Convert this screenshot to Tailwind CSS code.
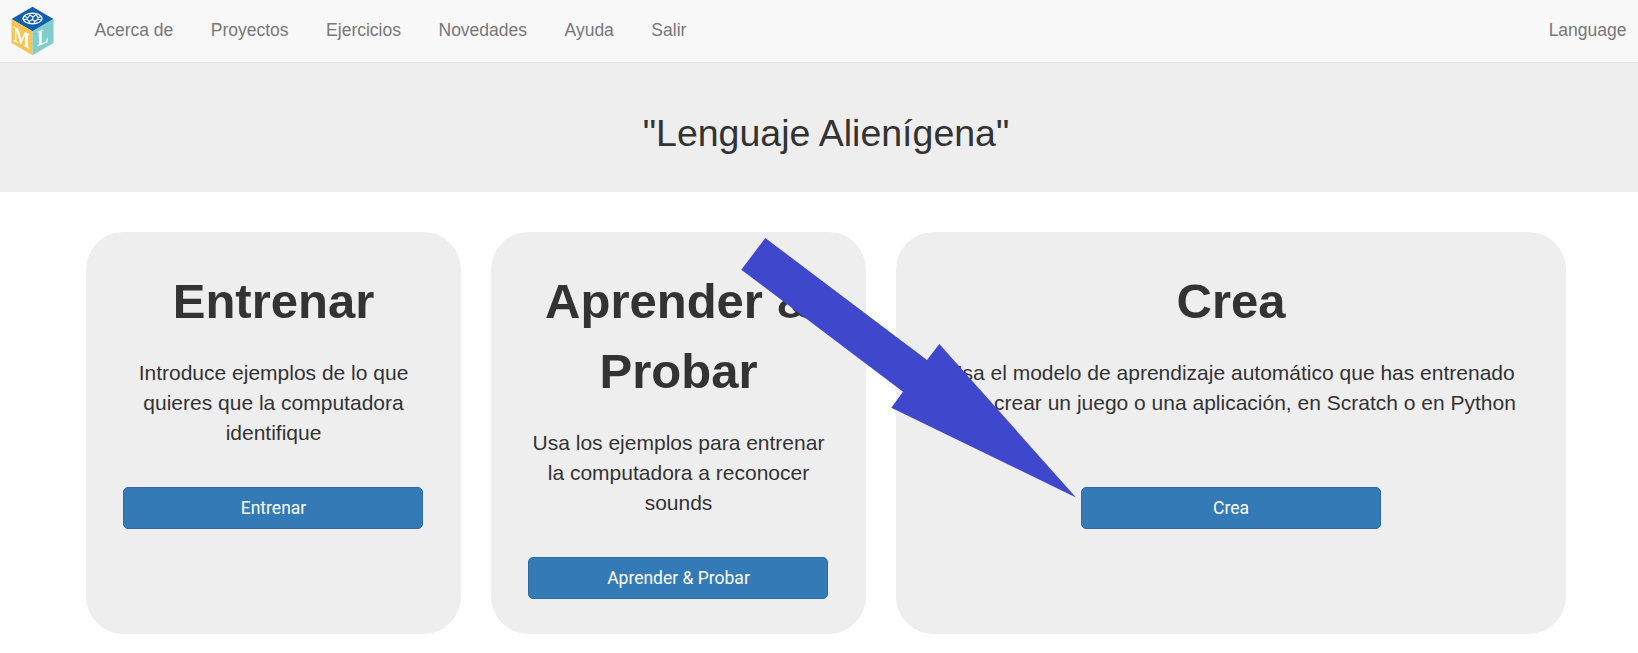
<!DOCTYPE html>
<html lang="es">
<head>
<meta charset="utf-8">
<title>Lenguaje Alienígena</title>
<script src="https://cdn.jsdelivr.net/npm/@tailwindcss/browser@4"></script>
</head>
<body class="relative h-[653px] overflow-hidden bg-white font-['Liberation_Sans',Arial,sans-serif] text-[#333]">
<nav class="flex h-[63px] items-start border-b border-[#e5e5e5] bg-[#f8f8f8] text-[17.5px] leading-[25px] text-[#777]">
  <svg class="ml-[11px] mt-[6px] h-[50px] w-[43px] shrink-0" viewBox="0 0 43 50">
    <path fill="#1360ae" d="M21.5 .7 42.5 13 21.5 25.3 .5 13z"/>
    <path fill="#f6c453" d="M.5 13 21.5 25.3V49.3L.5 37z"/>
    <path fill="#82cccb" d="M42.5 13 21.5 25.3V49.3L42.5 37z"/>
    <ellipse cx="21.5" cy="12.500" rx="9.5" ry="5.3" fill="#1360ae" stroke="#fff" stroke-width="1.400"/>
    <path fill="none" stroke="#fff" stroke-width="1.100" d="M13 10.500l4 1 2-2.500 3 2 3-2.500 2 3 3-1M12.500 14l3.500-1 2 2.500 3.500-2 2.500 2 3-2.500 3 1M17 11.500l-1 1.500M22 11l-.5 2.500M27 11v2M18 15.500l1 2M24 15.500l-1 2.500"/>
    <text transform="matrix(1 .5 0 1 2.600 34.800)" font-family="Liberation Serif" font-size="22" font-weight="700" textLength="16.500" lengthAdjust="spacingAndGlyphs" fill="#fff">M</text>
    <text transform="matrix(1 -.4 0 1 26.200 40.300)" font-family="Liberation Serif" font-size="22" font-weight="700" textLength="11" lengthAdjust="spacingAndGlyphs" fill="#fff">L</text>
  </svg>
  <div class="ml-[40.500px] flex gap-[37.500px] pt-[17.500px]">
    <a>Acerca de</a><a>Proyectos</a><a>Ejercicios</a><a>Novedades</a><a>Ayuda</a><a>Salir</a>
  </div>
  <a class="ml-auto mr-[11.500px] pt-[17.500px]">Language</a>
</nav>
<header class="flex h-[129px] items-center justify-center bg-[#eee] pt-[11px] pl-[14px]">
  <h1 class="text-[37.500px] leading-[41px]">"Lenguaje Alienígena"</h1>
</header>
<main class="flex gap-[30px] pl-[86px] pt-[40px] text-center">
  <section class="flex h-[402px] w-[375px] flex-col items-center rounded-[37.500px] bg-[#eee] px-[37px] pt-[34px]">
    <h2 class="text-[49px] font-bold leading-[70px]">Entrenar</h2>
    <p class="mt-[22px] h-[90px] whitespace-nowrap text-[21px] leading-[30px]">Introduce ejemplos de lo que<br>quieres que la computadora<br>identifique</p>
    <button class="mr-px mt-[39px] h-[42px] w-[300px] shrink-0 rounded-[5px] border border-[#2e6da4] bg-[#337ab7] pl-px font-[Roboto] text-[17.500px] leading-[25px] text-white">Entrenar</button>
  </section>
  <section class="flex h-[402px] w-[375px] flex-col items-center rounded-[37.500px] bg-[#eee] px-[37px] pt-[34px]">
    <h2 class="text-[49px] font-bold leading-[70px]">Aprender &amp;<br>Probar</h2>
    <p class="mt-[22px] h-[90px] whitespace-nowrap text-[21px] leading-[30px]">Usa los ejemplos para entrenar<br>la computadora a reconocer<br>sounds</p>
    <button class="mr-px mt-[39px] h-[42px] w-[300px] shrink-0 rounded-[5px] border border-[#2e6da4] bg-[#337ab7] pl-px font-[Roboto] text-[17.500px] leading-[25px] text-white">Aprender &amp; Probar</button>
  </section>
  <section class="flex h-[402px] w-[670px] flex-col items-center rounded-[37.500px] bg-[#eee] px-[37px] pt-[34px]">
    <h2 class="text-[49px] font-bold leading-[70px]">Crea</h2>
    <p class="mt-[22px] h-[90px] whitespace-nowrap text-[21px] leading-[30px]">Usa el modelo de aprendizaje automático que has entrenado<br>para crear un juego o una aplicación, en Scratch o en Python</p>
    <button class="mt-[39px] h-[42px] w-[300px] rounded-[5px] border border-[#2e6da4] bg-[#337ab7] font-[Roboto] text-[17.500px] leading-[25px] text-white">Crea</button>
  </section>
</main>
<svg class="pointer-events-none absolute left-[741px] top-[238px] h-[260px] w-[336px]" viewBox="741 238 336 260">
  <path fill="#3f48cc" d="M765.300 238 927 360 939.300 344 1076 497.500 891.300 407.700 903 391.700 741.300 269.700z"/>
</svg>
</body>
</html>
